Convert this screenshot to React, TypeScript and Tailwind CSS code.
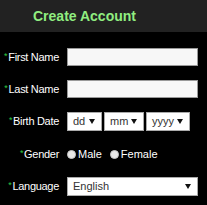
import React from 'react';

const font = { fontFamily: '"Liberation Sans", Arial, sans-serif' };

const Label = ({ text }: { text: string }) => (
  <div className="text-right text-[11px] tracking-[-0.3px] text-white leading-none whitespace-nowrap">
    <span className="text-[#2ecc40] text-[9px] align-top mr-[1px]">*</span>
    {text}
  </div>
);

const FakeSelect = ({ value, className }: { value: string; className: string }) => (
  <div
    className={`flex items-center justify-between h-[19px] bg-white border border-[#aaa] pl-[5px] pr-[6px] text-[11px] text-[#333] ${className}`}
  >
    <span>{value}</span>
    <svg width="6" height="5" viewBox="0 0 6 5" className="shrink-0">
      <path d="M0 0h6L3 5z" fill="#111" />
    </svg>
  </div>
);

const Radio = ({ label }: { label: string }) => (
  <label className="flex items-center gap-[2px] text-[11px] text-white">
    <span className="w-[9px] h-[9px] rounded-full bg-[#e8e8e8] border border-[#c8c8c8]" />
    {label}
  </label>
);

export default function App() {
  return (
    <div className="w-[207px] h-[205px] bg-black overflow-hidden" style={font}>
      <div className="h-[32px] bg-[#222] flex items-center pl-[33px]">
        <h1 className="text-[14px] font-bold text-[#90ee80]">Create Account</h1>
      </div>

      <div className="grid grid-cols-[59px_1fr] gap-x-2 gap-y-[14px] items-center pt-[16px]">
        <Label text="First Name" />
        <input className="w-[131px] h-[18px] bg-[#f7f7f7] border border-[#999] outline-none" />

        <Label text="Last Name" />
        <input className="w-[131px] h-[18px] bg-[#f7f7f7] border border-[#999] outline-none" />

        <Label text="Birth Date" />
        <div className="flex gap-[2px]">
          <FakeSelect value="dd" className="w-[35px]" />
          <FakeSelect value="mm" className="w-[40px]" />
          <FakeSelect value="yyyy" className="w-[44px]" />
        </div>

        <Label text="Gender" />
        <div className="flex items-center gap-[8px] h-[18px]">
          <Radio label="Male" />
          <Radio label="Female" />
        </div>

        <Label text="Language" />
        <FakeSelect value="English" className="w-[131px] h-[18px]" />
      </div>
    </div>
  );
}
